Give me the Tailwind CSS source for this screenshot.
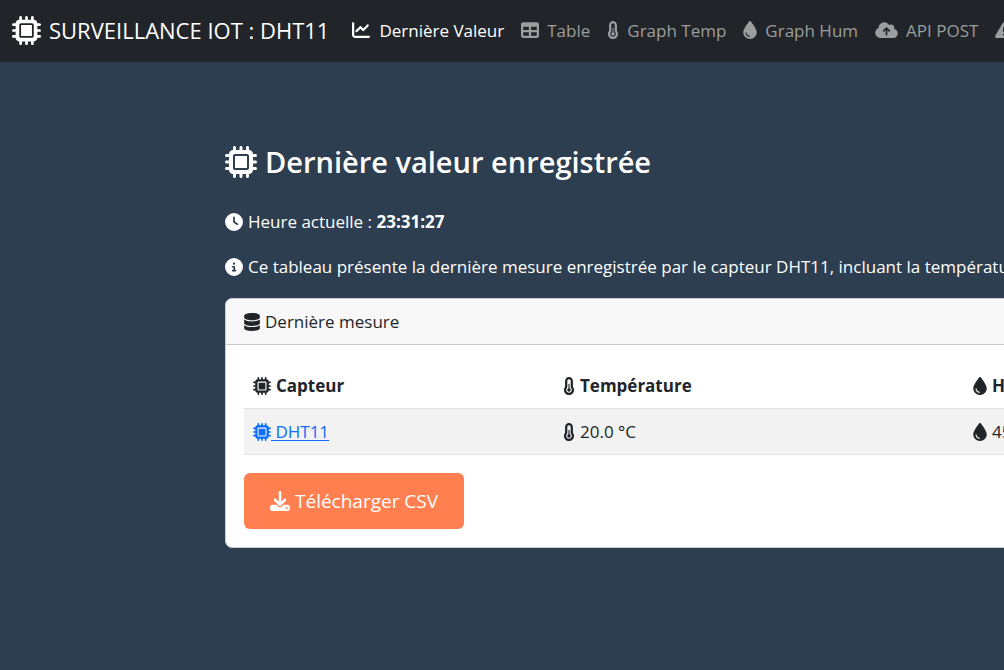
<!DOCTYPE html>
<html lang="fr">
<head>
<meta charset="utf-8">
<meta name="viewport" content="width=device-width, initial-scale=1">
<title>Surveillance IoT : DHT11</title>
<script src="https://cdn.jsdelivr.net/npm/@tailwindcss/browser@4"></script>
</head>
<body class="min-h-screen overflow-x-hidden bg-[#2c3e50] font-['Open_Sans','Noto_Sans',sans-serif] text-[17px] leading-[27px] text-white">
<svg class="hidden" aria-hidden="true">
  <symbol id="chip" viewBox="0 0 512 512"><path d="M176 24c0-13.300-10.700-24-24-24s-24 10.700-24 24V64c-35.300 0-64 28.700-64 64H24c-13.300 0-24 10.700-24 24s10.700 24 24 24H64v56H24c-13.300 0-24 10.700-24 24s10.700 24 24 24H64v56H24c-13.300 0-24 10.700-24 24s10.700 24 24 24H64c0 35.300 28.700 64 64 64v40c0 13.300 10.700 24 24 24s24-10.700 24-24V448h56v40c0 13.300 10.700 24 24 24s24-10.700 24-24V448h56v40c0 13.300 10.700 24 24 24s24-10.700 24-24V448c35.300 0 64-28.700 64-64h40c13.300 0 24-10.700 24-24s-10.700-24-24-24H448V280h40c13.300 0 24-10.700 24-24s-10.700-24-24-24H448V176h40c13.300 0 24-10.700 24-24s-10.700-24-24-24H448c0-35.300-28.700-64-64-64V24c0-13.300-10.700-24-24-24s-24 10.700-24 24V64H280V24c0-13.300-10.700-24-24-24s-24 10.700-24 24V64H176V24zM160 128H352c17.700 0 32 14.300 32 32V352c0 17.700-14.300 32-32 32H160c-17.700 0-32-14.300-32-32V160c0-17.700 14.300-32 32-32zm192 32H160V352H352V160z"/></symbol>
  <symbol id="chart" viewBox="0 0 512 512"><path d="M64 64c0-17.700-14.300-32-32-32S0 46.300 0 64V400c0 44.200 35.800 80 80 80H480c17.700 0 32-14.300 32-32s-14.300-32-32-32H80c-8.800 0-16-7.200-16-16V64zm406.600 86.600c12.500-12.500 12.500-32.800 0-45.300s-32.800-12.500-45.300 0L320 210.700l-57.400-57.400c-12.500-12.500-32.800-12.500-45.300 0l-112 112c-12.500 12.500-12.500 32.800 0 45.300s32.800 12.500 45.300 0L240 221.300l57.400 57.400c12.500 12.500 32.800 12.500 45.300 0l128-128z"/></symbol>
  <symbol id="table" viewBox="0 0 512 512"><path d="M64 256V160H224v96H64zm0 64H224v96H64V320zm224 96V320H448v96H288zM448 256H288V160H448v96zM64 32C28.700 32 0 60.700 0 96V416c0 35.300 28.700 64 64 64H448c35.300 0 64-28.700 64-64V96c0-35.300-28.700-64-64-64H64z"/></symbol>
  <symbol id="thermo" viewBox="0 0 320 512"><path d="M160 64c-26.500 0-48 21.500-48 48V276.500c0 17.300-7.100 31.900-15.300 42.500C86.200 332.600 80 349.500 80 368c0 44.200 35.800 80 80 80s80-35.800 80-80c0-18.500-6.200-35.400-16.700-48.900c-8.200-10.600-15.300-25.200-15.300-42.500V112c0-26.500-21.500-48-48-48zM48 112C48 50.200 98.100 0 160 0s112 50.100 112 112V276.500c0 .1 .1 .3 .2 .6c.2 .6 .8 1.600 1.700 2.800c18.900 24.400 30.100 55 30.100 88.100c0 79.500-64.500 144-144 144S16 447.500 16 368c0-33.200 11.200-63.800 30.100-88.100c.9-1.200 1.500-2.200 1.700-2.800c.1-.3 .2-.5 .2-.6V112zM208 368c0 26.500-21.500 48-48 48s-48-21.500-48-48c0-20.900 13.400-38.700 32-45.300V208c0-8.800 7.200-16 16-16s16 7.200 16 16V322.700c18.600 6.600 32 24.400 32 45.300z"/></symbol>
  <symbol id="drop" viewBox="0 0 384 512"><path d="M192 512C86 512 0 426 0 320C0 228.800 130.200 57.700 166.600 11.700C172.600 4.200 181.500 0 191.100 0h1.800c9.600 0 18.500 4.200 24.500 11.700C253.800 57.700 384 228.800 384 320c0 106-86 192-192 192zM96 336c0-8.800-7.200-16-16-16s-16 7.200-16 16c0 61.900 50.100 112 112 112c8.800 0 16-7.200 16-16s-7.200-16-16-16c-44.200 0-80-35.800-80-80z"/></symbol>
  <symbol id="cloud" viewBox="0 0 640 512"><path d="M144 480C64.500 480 0 415.500 0 336c0-62.800 40.200-116.200 96.200-135.900c-.1-2.700-.2-5.400-.2-8.100c0-88.400 71.600-160 160-160c59.300 0 111 32.200 138.700 80.200C409.900 102 428.300 96 448 96c53 0 96 43 96 96c0 12.200-2.300 23.800-6.400 34.600C596 238.400 640 290.100 640 352c0 70.700-57.300 128-128 128H144zm79-217c-9.400 9.400-9.400 24.600 0 33.900s24.600 9.400 33.900 0l39-39V392c0 13.300 10.700 24 24 24s24-10.700 24-24V257.900l39 39c9.400 9.400 24.600 9.400 33.900 0s9.400-24.600 0-33.900l-80-80c-9.400-9.400-24.600-9.400-33.900 0l-80 80z"/></symbol>
  <symbol id="warning" viewBox="0 0 512 512"><path fill-rule="evenodd" d="M256 32c14 0 27 7.500 34 19.800l216 368c7 12 7 27 .2 39.500S486 480 472 480H40c-14 0-27-8-34-20.500s-7-27.500.2-39.700l216-368C229 39.500 242 32 256 32zm0 128c-13 0-24 11-24 24v112c0 13 11 24 24 24s24-11 24-24V184c0-13-11-24-24-24zm0 192a32 32 0 1 0 0 64 32 32 0 1 0 0-64z"/></symbol>
  <symbol id="clock" viewBox="0 0 512 512"><path d="M256 0a256 256 0 1 1 0 512A256 256 0 1 1 256 0zM232 120V256c0 8 4 15.500 10.700 20l96 64c11 7.400 25.900 4.400 33.300-6.700s4.400-25.900-6.700-33.300L280 243.200V120c0-13.300-10.700-24-24-24s-24 10.700-24 24z"/></symbol>
  <symbol id="info" viewBox="0 0 512 512"><path d="M256 512A256 256 0 1 0 256 0a256 256 0 1 0 0 512zM216 336h24V272H216c-13.300 0-24-10.700-24-24s10.700-24 24-24h48c13.300 0 24 10.700 24 24v88h8c13.300 0 24 10.700 24 24s-10.700 24-24 24H216c-13.300 0-24-10.700-24-24s10.700-24 24-24zm40-208a32 32 0 1 1 0 64 32 32 0 1 1 0-64z"/></symbol>
  <symbol id="database" viewBox="0 0 448 512"><path d="M448 80v48c0 44.200-100.300 80-224 80S0 172.200 0 128V80C0 35.800 100.300 0 224 0S448 35.800 448 80zM393.200 214.700c20.800-7.400 39.900-16.900 54.800-28.600V288c0 44.200-100.300 80-224 80S0 332.200 0 288V186.100c14.900 11.800 34 21.200 54.800 28.600C99.700 230.700 159.500 240 224 240s124.300-9.300 169.200-25.300zM0 346.100c14.900 11.800 34 21.200 54.800 28.600C99.700 390.700 159.500 400 224 400s124.300-9.300 169.200-25.300c20.800-7.400 39.900-16.900 54.800-28.600V432c0 44.200-100.300 80-224 80S0 476.200 0 432V346.100z"/></symbol>
  <symbol id="download" viewBox="0 0 512 512"><path d="M288 32c0-17.700-14.300-32-32-32s-32 14.300-32 32V274.700l-73.400-73.400c-12.500-12.500-32.800-12.500-45.300 0s-12.500 32.800 0 45.300l128 128c12.500 12.500 32.800 12.500 45.300 0l128-128c12.500-12.500 12.500-32.800 0-45.300s-32.800-12.500-45.300 0L288 274.700V32zM64 352c-35.300 0-64 28.700-64 64v32c0 35.300 28.700 64 64 64H448c35.300 0 64-28.700 64-64V416c0-35.300-28.700-64-64-64H346.500l-45.300 45.300c-25 25-65.500 25-90.500 0L165.500 352H64zm368 56a24 24 0 1 1 0 48 24 24 0 1 1 0-48z"/></symbol>
</svg>

<nav class="flex h-[62px] items-center overflow-hidden bg-[#212529] px-3 pb-0.5 whitespace-nowrap">
  <a href="#" class="mr-[22px] flex shrink-0 items-center gap-2 text-[22px]"><svg class="size-[29px] fill-current"><use href="#chip"/></svg>SURVEILLANCE IOT : DHT11</a>
  <ul class="flex shrink-0 items-center gap-[17px] text-[#9b9d9f]">
    <li><a href="#" aria-current="page" class="flex items-center gap-2 text-white"><svg class="h-[18px] w-5 fill-current"><use href="#chart"/></svg>Dernière Valeur</a></li>
    <li><a href="#" class="flex items-center gap-2"><svg class="h-[18px] w-[18px] fill-current"><use href="#table"/></svg>Table</a></li>
    <li><a href="#" class="flex items-center gap-2"><svg class="h-[18px] w-3 fill-current"><use href="#thermo"/></svg>Graph Temp</a></li>
    <li><a href="#" class="flex items-center gap-2"><svg class="h-[18px] w-[14px] fill-current"><use href="#drop"/></svg>Graph Hum</a></li>
    <li><a href="#" class="flex items-center gap-2"><svg class="h-[18px] w-[23px] fill-current"><use href="#cloud"/></svg>API POST</a></li>
    <li><a href="#" class="flex items-center gap-2"><svg class="size-[18px] fill-current"><use href="#warning"/></svg>Incidents</a></li>
  </ul>
</nav>

<main class="ml-[225px] min-w-[1458px] pt-[78px]">
  <h1 class="flex items-center gap-2 text-[29px] leading-[44px] font-semibold"><svg class="size-8 fill-current"><use href="#chip"/></svg>Dernière valeur enregistrée</h1>
  <p class="mt-6 flex items-center gap-[5px]"><svg class="size-[18px] fill-current"><use href="#clock"/></svg><span>Heure actuelle : <strong>23:31:27</strong></span></p>
  <p class="mt-[18px] flex items-center gap-[5px]"><svg class="size-[18px] fill-current"><use href="#info"/></svg>Ce tableau présente la dernière mesure enregistrée par le capteur DHT11, incluant la température et l'humidité.</p>

  <section class="mt-[18px] overflow-hidden rounded-[7px] border border-[#c8cacc] bg-white text-[#212529]">
    <h2 class="flex items-center gap-[5px] border-b border-[#c8cacc] bg-[#f8f8f8] px-[18px] py-[9px]"><svg class="h-[18px] w-4 fill-current"><use href="#database"/></svg>Dernière mesure</h2>
    <div class="p-[18px]">
      <table class="w-full table-fixed text-left">
        <colgroup><col class="w-[310px]"><col class="w-[410px]"><col></colgroup>
        <thead>
          <tr class="border-b border-[#dee2e6]">
            <th class="p-[9px]"><span class="flex items-center gap-[5px]"><svg class="size-[18px] fill-current"><use href="#chip"/></svg>Capteur</span></th>
            <th class="p-[9px]"><span class="flex items-center gap-[5px]"><svg class="h-[18px] w-3 fill-current"><use href="#thermo"/></svg>Température</span></th>
            <th class="p-[9px]"><span class="flex items-center gap-[5px]"><svg class="h-[18px] w-[14px] fill-current"><use href="#drop"/></svg>Humidité</span></th>
          </tr>
        </thead>
        <tbody>
          <tr class="border-b border-[#dee2e6] bg-[#f2f2f2]">
            <td class="p-[9px]"><a href="#" class="flex items-center text-[#0d6efd]"><svg class="size-[18px] fill-current"><use href="#chip"/></svg><span class="underline underline-offset-2">&nbsp;DHT11</span></a></td>
            <td class="p-[9px]"><span class="flex items-center gap-[5px]"><svg class="h-[18px] w-3 fill-current"><use href="#thermo"/></svg>20.0 °C</span></td>
            <td class="p-[9px]"><span class="flex items-center gap-[5px]"><svg class="h-[18px] w-[14px] fill-current"><use href="#drop"/></svg>45.0 %</span></td>
          </tr>
        </tbody>
      </table>
      <button type="button" class="mt-[18px] flex items-center gap-[5px] rounded-md bg-[#ff7f50] px-[26px] py-[14px] text-[19px] leading-7 text-white"><svg class="size-5 fill-current"><use href="#download"/></svg>Télécharger CSV</button>
    </div>
  </section>
</main>
</body>
</html>
